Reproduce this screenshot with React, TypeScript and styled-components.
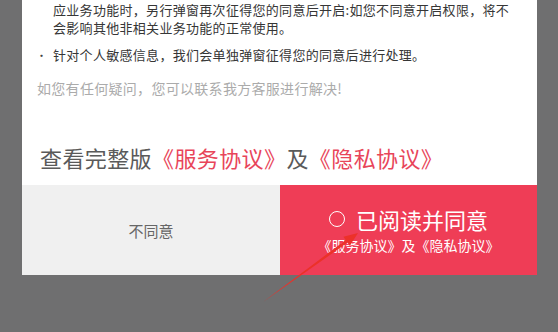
import React from 'react';
import styled, {createGlobalStyle} from 'styled-components';

const GlobalStyle = createGlobalStyle`
    body {
        margin: 0;
        background-color: #6f6f70;
        font-family: "Noto Sans CJK SC", "Noto Sans", sans-serif;
    }
`;

const App: React.FC = () => {
    return (
        <Page>
            <GlobalStyle/>
            <Modal>
                <Content>
                    <Item $bullet={false}>
                        应业务功能时，另行弹窗再次征得您的同意后开启:如您不同意开启权限，将不<br/>
                        会影响其他非相关业务功能的正常使用。
                    </Item>
                    <Item $bullet>针对个人敏感信息，我们会单独弹窗征得您的同意后进行处理。</Item>
                </Content>
                <Hint>如您有任何疑问，您可以联系我方客服进行解决!</Hint>
                <Title>
                    查看完整版<Link>《服务协议》</Link>及<Link>《隐私协议》</Link>
                </Title>
                <Actions>
                    <DeclineButton>不同意</DeclineButton>
                    <AgreeButton>
                        <AgreeMain>
                            <Radio/>已阅读并同意
                        </AgreeMain>
                        <AgreeSub>《服务协议》及《隐私协议》</AgreeSub>
                    </AgreeButton>
                </Actions>
            </Modal>
            <Arrow width="558" height="332" viewBox="0 0 558 332">
                <polygon
                    points="263,302 347.6,242.6 349.8,245.8 358,233 343.4,236.8 345.7,240"
                    fill="#ec3129"
                />
            </Arrow>
        </Page>
    );
};

export default App;

const Page = styled.div`
    position: relative;
    width: 558px;
    height: 332px;
    overflow: hidden;
    padding-left: 22px;
    box-sizing: border-box;
`;

const Modal = styled.div`
    width: 515px;
    background-color: #ffffff;
    display: flex;
    flex-direction: column;
`;

const Content = styled.div`
    display: flex;
    flex-direction: column;
    gap: 9px;
    padding-top: 1px;
`;

const Item = styled.div<{ $bullet: boolean }>`
    position: relative;
    padding-left: 31px;
    font-size: 13px;
    line-height: 18px;
    letter-spacing: 0.3px;
    color: #363636;
    white-space: nowrap;

    &::before {
        content: ${p => (p.$bullet ? '"•"' : 'none')};
        position: absolute;
        left: 14px;
        top: 0;
        font-size: 11px;
        color: #444;
    }
`;

const Hint = styled.div`
    margin-top: 14px;
    padding-left: 15px;
    font-size: 14px;
    line-height: 20px;
    letter-spacing: 0.3px;
    color: #ababab;
`;

const Title = styled.div`
    margin-top: 44px;
    padding-left: 18px;
    font-size: 22px;
    line-height: 30px;
    letter-spacing: 0.4px;
    color: #5a5a5a;
    white-space: nowrap;
`;

const Link = styled.span`
    color: #e8455a;
`;

const Actions = styled.div`
    margin-top: 13px;
    display: grid;
    grid-template-columns: 258px 257px;
    height: 90px;
`;

const DeclineButton = styled.div`
    display: flex;
    align-items: center;
    justify-content: center;
    background-color: #f0f0f0;
    color: #666666;
    font-size: 15px;
`;

const AgreeButton = styled.div`
    display: flex;
    flex-direction: column;
    align-items: center;
    justify-content: center;
    background-color: #ef3d56;
    color: #ffffff;
    padding-bottom: 2px;
`;

const AgreeMain = styled.div`
    display: flex;
    align-items: center;
    font-size: 22px;
    line-height: 30px;
`;

const Radio = styled.span`
    width: 16px;
    height: 16px;
    border: 1.5px solid #ffffff;
    border-radius: 50%;
    box-sizing: border-box;
    margin-right: 11px;
`;

const AgreeSub = styled.div`
    font-size: 14px;
    line-height: 20px;
    margin-top: 1px;
`;

const Arrow = styled.svg`
    position: absolute;
    left: 0;
    top: 0;
    pointer-events: none;
`;
